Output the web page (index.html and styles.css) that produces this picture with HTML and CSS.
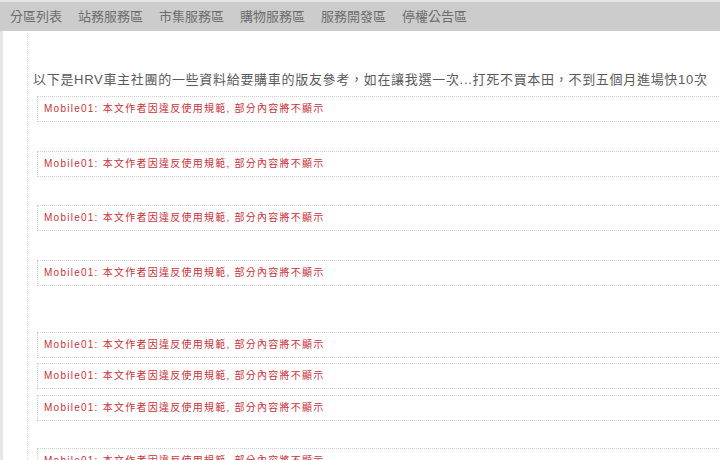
FILE: index.html
```html
<!DOCTYPE html>
<html lang="zh-Hant">
<head>
    <meta charset="UTF-8">
    <title>HRV 車主分享</title>
    <link rel="stylesheet" href="styles.css">
</head>
<body>
    <div class="nav">
        <a href="#">分區列表</a>
        <a href="#">站務服務區</a>
        <a href="#">市集服務區</a>
        <a href="#">購物服務區</a>
        <a href="#">服務開發區</a>
        <a href="#">停權公告區</a>
    </div>

    <div class="page">
        <div class="post">
            <p class="intro">以下是HRV車主社團的一些資料給要購車的版友參考，如在讓我選一次...打死不買本田，不到五個月進場快10次</p>

            <div class="notice">Mobile01: 本文作者因違反使用規範, 部分內容將不顯示</div>
            <div class="notice gap-m">Mobile01: 本文作者因違反使用規範, 部分內容將不顯示</div>
            <div class="notice gap-m">Mobile01: 本文作者因違反使用規範, 部分內容將不顯示</div>
            <div class="notice gap-m">Mobile01: 本文作者因違反使用規範, 部分內容將不顯示</div>
            <div class="notice gap-l">Mobile01: 本文作者因違反使用規範, 部分內容將不顯示</div>
            <div class="notice gap-s">Mobile01: 本文作者因違反使用規範, 部分內容將不顯示</div>
            <div class="notice gap-s">Mobile01: 本文作者因違反使用規範, 部分內容將不顯示</div>
            <div class="notice gap-m">Mobile01: 本文作者因違反使用規範, 部分內容將不顯示</div>
        </div>
    </div>
</body>
</html>
```

FILE: styles.css
```css
* {
    margin: 0;
    padding: 0;
    box-sizing: border-box;
}

html, body {
    height: 100%;
    overflow: hidden;
}

body {
    font-family: 'Liberation Sans', 'Noto Sans CJK TC', sans-serif;
    background: white;
}

.nav {
    height: 31px;
    background: #cccccc;
    border-top: 2px solid #e4e4e4;
    display: flex;
    align-items: center;
    gap: 16px;
    padding-left: 10px;
}

.nav a {
    color: #6c6c6c;
    font-size: 13px;
    text-decoration: none;
    line-height: 1;
}

.page {
    border-left: 3px solid #e6e6e6;
    min-height: 100%;
    padding-top: 2px;
}

.post {
    margin-left: 24px;
    border-left: 1px dotted #dcdcdc;
    padding: 37px 0 0 5px;
    min-height: 440px;
}

.intro {
    color: #5a5a5a;
    font-size: 13px;
    line-height: 20px;
    letter-spacing: 0.7px;
    white-space: nowrap;
    margin-bottom: 6px;
}

.notice {
    margin-left: 4px;
    width: 720px;
    height: 26px;
    border: 1px dotted #cfcfcf;
    padding-left: 6px;
    color: #c8323a;
    font-size: 10px;
    line-height: 24px;
    letter-spacing: 1.25px;
    white-space: nowrap;
}

.gap-s {
    margin-top: 5.5px;
}

.gap-m {
    margin-top: 28.5px;
}

.gap-m:last-child {
    margin-top: 27px;
}

.gap-l {
    margin-top: 46px;
}
```
